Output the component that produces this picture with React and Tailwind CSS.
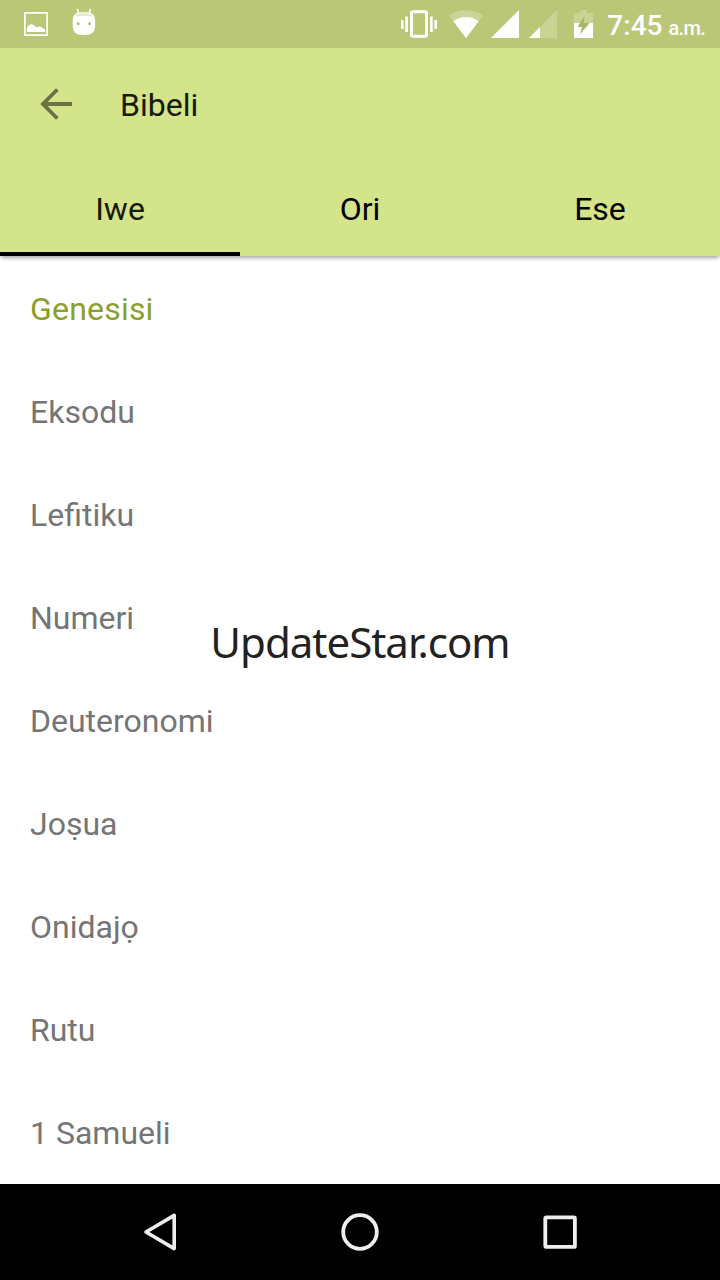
import React, { useState } from "react";

const TABS = ["Iwe", "Ori", "Ese"];

const BOOKS = [
  "Genesisi",
  "Eksodu",
  "Lefitiku",
  "Numeri",
  "Deuteronomi",
  "Joṣua",
  "Onidajọ",
  "Rutu",
  "1 Samueli",
];

function StatusBar() {
  return (
    <div className="flex h-12 shrink-0 items-center justify-between bg-[#b9c777] text-white">
      <div className="flex items-center pl-6">
        {/* saved picture */}
        <svg width="24" height="24" viewBox="0 0 24 24" fill="none" aria-hidden="true">
          <rect x="0.9" y="0.9" width="22.2" height="22.2" stroke="white" strokeWidth="1.7" />
          <path
            d="M3 20v-4.500c1.200-1.700 2.200-3.300 4.400-3.300 2.400 0 3.300 2.300 5 3.100 1.400-.9 4.300-1.200 5.800.4.8.8 2.300 1 2.800 2.100V20z"
            fill="white"
          />
        </svg>
        {/* android head */}
        <svg className="mb-1 ml-6" width="24" height="28" viewBox="0 0 24 28" fill="none" aria-hidden="true">
          <path d="M6.500 6.500 5.600 1.500M17.300 6.500l.9-5" stroke="white" strokeWidth="1.500" strokeLinecap="round" />
          <path
            d="M3.500 5.800C5 4.500 8 4.300 11.900 4.300s6.900.2 8.400 1.500c2.400 2 2.900 4.200 2.900 9.200 0 9-2 12-11.300 12S.7 24 .7 15c0-5 .5-7.200 2.800-9.200z"
            fill="white"
          />
          <path d="M4 6.800C7 4.800 17 4.800 20 6.800v1.700c-4-1-12-1-16 0z" fill="#b9c777" fillOpacity="0.4" />
          <rect x="5" y="14.500" width="2.400" height="2.400" fill="#a9b865" />
          <rect x="16.400" y="14.500" width="2.400" height="2.400" fill="#a9b865" />
        </svg>
      </div>

      <div className="flex items-center pr-[15px]">
        {/* vibrate */}
        <svg width="36" height="28" viewBox="0 0 36 28" fill="white" aria-hidden="true">
          <rect x="0" y="10" width="2.600" height="9" />
          <rect x="4.300" y="6.500" width="2.600" height="15.500" />
          <rect x="29.100" y="6.500" width="2.600" height="15.500" />
          <rect x="33.400" y="10" width="2.600" height="9" />
          <rect x="10.500" y="1.700" width="15" height="24.600" rx="1.500" fill="none" stroke="white" strokeWidth="3" />
        </svg>
        {/* wifi */}
        <svg className="ml-3" width="34" height="28" viewBox="0 0 34 28" fill="white" aria-hidden="true">
          <path d="M17 28 0 5.500C10-1.600 24-1.600 34 5.500z" fillOpacity="0.25" />
          <path d="M17 28 4.300 11.200c7.400-5.700 18-5.700 25.400 0z" />
        </svg>
        {/* sim 1 */}
        <svg className="ml-2" width="28" height="28" viewBox="0 0 28 28" fill="white" aria-hidden="true">
          <path d="M28 0v28H0z" />
        </svg>
        {/* sim 2 */}
        <svg className="ml-2.5" width="28" height="28" viewBox="0 0 28 28" fill="white" aria-hidden="true">
          <path d="M28 0v28H0z" fillOpacity="0.22" />
          <path d="M11 17v11H0z" />
        </svg>
        {/* battery */}
        <svg className="ml-[17px]" width="19" height="28" viewBox="0 0 19 28" aria-hidden="true">
          <path d="M0 13V3h6V0h7v3h6v10z" fill="white" fillOpacity="0.22" />
          <path d="M0 13h19v15H0z" fill="white" />
          <path d="M10.500 6 9.800 13h5.700L6 24.500 8 17H3.500z" fill="#a9b965" />
        </svg>
        <div className="ml-3.5 flex items-baseline pt-1.5 font-medium">
          <span className="text-[28px] leading-8">7:45</span>
          <span className="ml-1.5 text-xl leading-8 tracking-[-0.7px]">a.m.</span>
        </div>
      </div>
    </div>
  );
}

function Header({ active, onSelect }) {
  return (
    <header className="relative z-10 shrink-0 bg-[#d4e48a] shadow-[0_3px_4px_-1px_rgba(0,0,0,0.35)]">
      <div className="flex h-28 items-center pl-10">
        <button type="button" aria-label="Back">
          <svg width="32" height="32" viewBox="0 0 32 32" fill="none" stroke="#6a7245" strokeWidth="3.800" aria-hidden="true">
            <path d="M32 16H3M17.400 1.500 2.900 16l14.500 14.500" />
          </svg>
        </button>
        <h1 className="ml-12 pt-0.5 text-[32px] leading-none text-[#151a06]">Bibeli</h1>
      </div>
      <nav className="grid h-24 grid-cols-3">
        {TABS.map((tab, i) => (
          <button
            key={tab}
            type="button"
            onClick={() => onSelect(i)}
            className={
              "border-b-4 pt-1.5 text-[32px] leading-none " +
              (i === active ? "border-black text-[#151a06]" : "border-transparent text-black")
            }
          >
            {tab}
          </button>
        ))}
      </nav>
    </header>
  );
}

function NavigationBar() {
  return (
    <div className="flex h-24 shrink-0 items-center justify-center gap-40 bg-black">
      <svg width="40" height="40" viewBox="0 0 40 40" fill="none" stroke="#eee" strokeWidth="3.600" strokeLinejoin="round">
        <path d="M34.200 3.400v33.200L6 20z" />
      </svg>
      <svg width="40" height="40" viewBox="0 0 40 40" fill="none" stroke="#eee" strokeWidth="3.800">
        <circle cx="20" cy="20" r="16.800" />
      </svg>
      <svg width="40" height="40" viewBox="0 0 40 40" fill="none" stroke="#eee" strokeWidth="3.800">
        <rect x="5.300" y="5.300" width="29.600" height="29.600" rx="1" />
      </svg>
    </div>
  );
}

export default function App() {
  const [activeTab, setActiveTab] = useState(0);
  const [book, setBook] = useState(0);

  return (
    <div className="relative flex h-[1280px] w-[720px] flex-col overflow-hidden bg-white font-[Roboto,sans-serif]">
      <StatusBar />
      <Header active={activeTab} onSelect={setActiveTab} />

      <main className="flex-1 overflow-hidden">
        <ul>
          {BOOKS.map((name, i) => (
            <li
              key={name}
              onClick={() => setBook(i)}
              className={
                "flex h-[103px] items-center pl-[30px] pt-0.5 text-[32px] leading-none " +
                (i === book ? "tracking-[0.2px] text-[#8a9f2c]" : "text-[#757575]")
              }
            >
              {name}
            </li>
          ))}
        </ul>
      </main>

      <NavigationBar />

      {/* watermark over the list */}
      <div className="pointer-events-none absolute inset-x-0 top-[614px] text-center font-['Noto_Sans',sans-serif] text-[42px] leading-[56px] tracking-[-1px] text-[#222]">
        UpdateStar.com
      </div>
    </div>
  );
}
